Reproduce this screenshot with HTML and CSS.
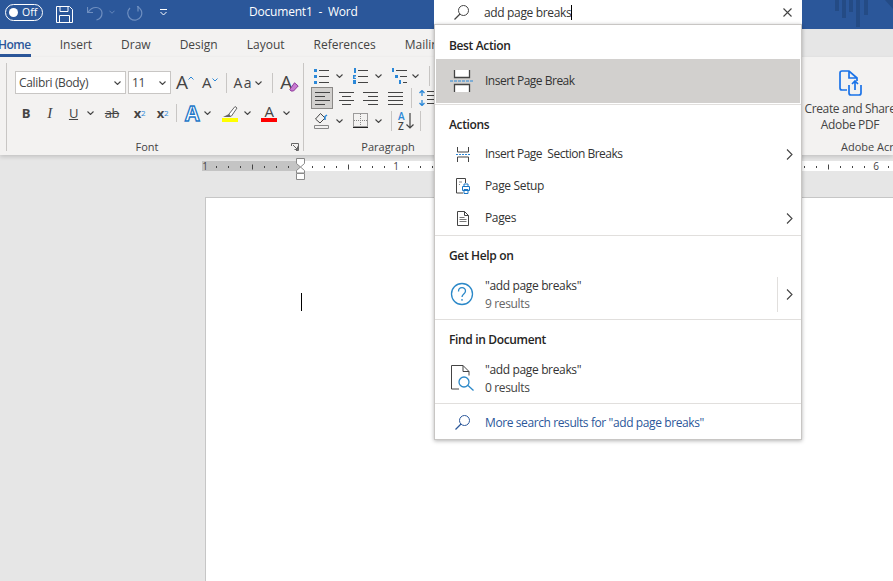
FILE: index.html
```html
<!DOCTYPE html>
<html lang="en">
<head>
    <meta charset="UTF-8">
    <meta name="viewport" content="width=device-width, initial-scale=1.0">
    <title>Document1 - Word</title>
    <link rel="stylesheet" href="styles.css">
</head>
<body>
    <svg class="defs">
        <symbol id="chev" viewBox="0 0 7 4"><path d="M.5.5 3.5 3.5 6.5.5" fill="none" stroke="#444" stroke-width="1.1"/></symbol>
        <symbol id="lines-left" viewBox="0 0 15 14"><path d="M0 1.5h15M0 5.5h10M0 9.5h15M0 13.5h10" stroke="#444"/></symbol>
        <symbol id="lines-center" viewBox="0 0 15 14"><path d="M0 1.5h15M3 5.5h9M0 9.5h15M3 13.5h9" stroke="#444"/></symbol>
        <symbol id="lines-right" viewBox="0 0 15 14"><path d="M0 1.5h15M5 5.5h10M0 9.5h15M5 13.5h10" stroke="#444"/></symbol>
        <symbol id="lines-full" viewBox="0 0 15 14"><path d="M0 1.5h15M0 5.5h15M0 9.5h15M0 13.5h15" stroke="#444"/></symbol>
        <symbol id="arrow-right" viewBox="0 0 7 11"><path d="M1 .5 6 5.5 1 10.5" fill="none" stroke="#444" stroke-width="1.1"/></symbol>
    </svg>

    <header class="titlebar">
        <div class="toggle"><span class="toggle-dot"></span><span>Off</span></div>
        <svg class="qa-save" width="17" height="17" viewBox="0 0 17 17" fill="none" stroke="#fff"><path d="M.5.5h13l3 3v13H.5zM4 .5v5h8v-5M3.5 16.5v-7h10v7"/></svg>
        <svg class="qa-undo" width="16" height="15" viewBox="0 0 16 15" fill="none" stroke="#6f8fc0" stroke-width="1.2"><path d="M.5 1v5.500H6M1 6.500C3 3 6 1.500 9 1.500c3.500 0 6 2.500 6 5.500 0 3-2 6-5.500 7"/></svg>
        <svg class="qa-chev" width="6" height="4" viewBox="0 0 7 4"><path d="M.5.5 3.500 3.500 6.500.5" fill="none" stroke="#6f8fc0"/></svg>
        <svg class="qa-redo" width="16" height="16" viewBox="0 0 16 16" fill="none" stroke="#6f8fc0" stroke-width="1.2"><path d="M10 1.500a7 7 0 1 1-7 1.500M11 1v5.500"/></svg>
        <svg class="qa-more" width="7" height="7" viewBox="0 0 7 7" fill="none" stroke="#fff"><path d="M0 .5h7M.5 3 3.500 6 6.500 3"/></svg>
        <div class="doc-title">Document1&nbsp; -&nbsp; Word</div>
        <svg class="title-art" width="58" height="29" viewBox="0 0 58 29" fill="#244b85"><path d="M0 0h4v11H0zM7 0h4v18H7zM14 0h4v12h-4zM21 0h4v27h-4zM29 0h4v15h-4zM50 0h8v9z"/></svg>
    </header>

    <nav class="tabs">
        <span class="tab tab-active">Home</span>
        <span class="tab">Insert</span>
        <span class="tab">Draw</span>
        <span class="tab">Design</span>
        <span class="tab">Layout</span>
        <span class="tab">References</span>
        <span class="tab">Mailings</span>
    </nav>

    <section class="ribbon">
        <div class="group group-stub"></div>

        <div class="group group-font">
            <div class="font-row font-row-top">
                <div class="combo combo-name"><span>Calibri (Body)</span><svg width="7" height="4"><use href="#chev"/></svg></div>
                <div class="combo combo-size"><span>11</span><svg width="7" height="4"><use href="#chev"/></svg></div>
                <div class="tool grow-a">
                    <span class="a-big">A</span>
                    <svg class="a-caret" width="6" height="4" viewBox="0 0 6 4"><path d="M.5 3.500 3 1 5.500 3.500" fill="none" stroke="#2b88d8"/></svg>
                </div>
                <div class="tool shrink-a">
                    <span class="a-small">A</span>
                    <svg class="a-caret" width="6" height="4" viewBox="0 0 6 4"><path d="M.5.5 3 3 5.500.5" fill="none" stroke="#2b88d8"/></svg>
                </div>
                <span class="sep sep-tall sep-a"></span>
                <div class="tool case-a"><span class="case-text">Aa</span><svg width="7" height="4"><use href="#chev"/></svg></div>
                <span class="sep sep-tall sep-b"></span>
                <div class="tool clear-a">
                    <span class="a-big">A</span>
                    <svg class="eraser" width="10" height="10" viewBox="0 0 10 10"><path d="M5.500.8 9.200 4 4.500 9H2L.8 7.500z" fill="#c77bd0" stroke="#8e3a9d"/></svg>
                </div>
            </div>
            <div class="font-row font-row-bottom">
                <span class="tool t-bold">B</span>
                <span class="tool t-italic">I</span>
                <span class="tool t-under">U</span>
                <svg class="t-chev" width="7" height="4"><use href="#chev"/></svg>
                <span class="tool t-strike">ab</span>
                <span class="tool t-script t-sub">x<sub>2</sub></span>
                <span class="tool t-script t-sup">x<sup>2</sup></span>
                <span class="sep sep-b2"></span>
                <span class="tool t-effect">A</span>
                <svg class="t-chev c-effect" width="7" height="4"><use href="#chev"/></svg>
                <div class="tool t-bar t-marker">
                    <svg width="16" height="13" viewBox="0 0 16 13"><path d="M7 9 13 1.500 15 3 9.500 11 7 11.500z" fill="#fff" stroke="#666"/><path d="M1 12 7 9l2 3z" fill="#666"/></svg>
                    <span class="bar bar-yellow"></span>
                </div>
                <svg class="t-chev c-marker" width="7" height="4"><use href="#chev"/></svg>
                <div class="tool t-bar t-color">
                    <span class="color-a">A</span>
                    <span class="bar bar-red"></span>
                </div>
                <svg class="t-chev c-color" width="7" height="4"><use href="#chev"/></svg>
            </div>
            <div class="group-label font-label">Font</div>
            <svg class="launcher" width="8" height="8" viewBox="0 0 8 8" fill="none" stroke="#666"><path d="M.5 3V.5H7.500V7.500H5M2 2 6.500 6.500M6.500 3.500v3h-3"/></svg>
        </div>

        <div class="group group-para">
            <div class="para-row">
                <svg class="p-bullets" width="15" height="16" viewBox="0 0 15 16"><path d="M0 1h3v3H0zM0 7h3v3H0zM0 13h3v3H0z" fill="#2b88d8"/><path d="M5 2.500h10M5 8.500h10M5 14.500h10" stroke="#444"/></svg>
                <svg class="p-chev" width="7" height="4"><use href="#chev"/></svg>
                <svg class="p-numbers" width="15" height="16" viewBox="0 0 15 16"><path d="M1 0h2v5H1zM0 7h3v1.500H1.500V10H3v1H0zM0 12h3v4H0z" fill="#2b88d8"/><path d="M5 2.500h10M5 8.500h10M5 14.500h10" stroke="#444"/></svg>
                <svg class="p-chev" width="7" height="4"><use href="#chev"/></svg>
                <svg class="p-multi" width="15" height="16" viewBox="0 0 15 16"><path d="M0 0h2v4H0zM3 7h3v3H3zM7 12h2v4H7z" fill="#2b88d8"/><path d="M4 2.500h11M8 8.500h7M11 14.500h4" stroke="#444"/></svg>
                <svg class="p-chev p-chev-multi" width="7" height="4"><use href="#chev"/></svg>
                <span class="sep sep-tall sep-p1"></span>
            </div>
            <div class="para-row">
                <span class="align-active"><svg width="15" height="14"><use href="#lines-left"/></svg></span>
                <svg class="a-center" width="15" height="14"><use href="#lines-center"/></svg>
                <svg class="a-right" width="15" height="14"><use href="#lines-right"/></svg>
                <svg class="a-full" width="15" height="14"><use href="#lines-full"/></svg>
                <span class="sep sep-tall sep-p2"></span>
                <svg class="a-spacing" width="18" height="16" viewBox="0 0 18 16"><path d="M3 0v6M3 10v6M.5 3 3 .5 5.500 3M.5 13 3 15.500 5.500 13" fill="none" stroke="#2b88d8" stroke-width="1.300"/><path d="M8 1.500h10M8 5.500h10M8 9.500h10M8 13.500h10" stroke="#444"/></svg>
            </div>
            <div class="para-row">
                <svg class="s-fill" width="15" height="17" viewBox="0 0 15 17" fill="none"><path d="M1.500 7 6.500 1.500 11 6 6 11z" stroke="#444"/><path d="M11 8V4.500L13 3" stroke="#2b88d8" stroke-width="1.500"/><path d="M.5 13.500h14v3H.5z" stroke="#888"/></svg>
                <svg class="p-chev" width="7" height="4"><use href="#chev"/></svg>
                <svg class="s-borders" width="15" height="15" viewBox="0 0 15 15" fill="none"><path d="M.5.5h14v13H.5z" stroke="#444" stroke-dasharray="1 1"/><path d="M7.500 1v12M1 7.500h13" stroke="#888" stroke-dasharray="1 1"/><path d="M0 14.500h15" stroke="#222"/></svg>
                <svg class="p-chev" width="7" height="4"><use href="#chev"/></svg>
                <span class="sep sep-tall sep-p3"></span>
                <div class="sort">
                    <div class="sort-letters"><span class="sort-a">A</span><span>Z</span></div>
                    <svg width="8" height="16" viewBox="0 0 8 16" fill="none" stroke="#444" stroke-width="1.200"><path d="M4 0v15M.5 11.500 4 15l3.500-3.500"/></svg>
                </div>
                <span class="sep sep-tall sep-p4"></span>
            </div>
            <div class="group-label">Paragraph</div>
        </div>

        <div class="group group-adobe">
            <svg class="adobe-icon" width="24" height="26" viewBox="0 0 24 26" fill="none" stroke="#1a73e8" stroke-width="1.700"><path d="M8 20H3q-2 0-2-2V3q0-2 2-2h7l8 7v3M10 1v7h8"/><path d="M10 15v8q0 2 2 2h8q2 0 2-2v-8M16 20v-9M13 14l3-3 3 3"/></svg>
            <div class="adobe-text">Create and Share<br>Adobe PDF</div>
            <div class="group-label adobe-label">Adobe Acrobat</div>
        </div>
    </section>

    <main class="workspace">
        <svg class="ruler" width="893" height="23" viewBox="0 158 893 23">
            <defs>
                <pattern id="ticks" patternUnits="userSpaceOnUse" width="96" height="23" patternTransform="translate(12 158)">
                    <path d="M12 8h1v2h-1zM24 8h1v2h-1zM36 8h1v2h-1zM48 6.500h1v5h-1zM60 8h1v2h-1zM72 8h1v2h-1zM84 8h1v2h-1z" fill="#444"/>
                </pattern>
            </defs>
            <rect x="202" y="161" width="98" height="10" fill="#c4c4c4"/>
            <rect x="300" y="161" width="593" height="10" fill="#fff"/>
            <rect x="206" y="161" width="687" height="10" fill="url(#ticks)"/>
            <text class="ruler-num" x="205" y="170" text-anchor="middle">1</text>
            <text class="ruler-num" x="396" y="170" text-anchor="middle">1</text>
            <text class="ruler-num" x="876" y="170" text-anchor="middle">6</text>
            <path d="M296.500 158.500h8v5l-4 3.500 4 3.500v2.500h-8v-2.500l4-3.500-4-3.500z" fill="#fff" stroke="#8a8a8a"/>
            <path d="M296.500 173.500h8v6h-8z" fill="#fff" stroke="#8a8a8a"/>
        </svg>
        <div class="page"><span class="text-caret"></span></div>
    </main>

    <div class="search">
        <div class="search-box">
            <svg class="search-icon" width="15" height="15" viewBox="0 0 15 15" fill="none" stroke="#444"><circle cx="9.500" cy="5.500" r="5"/><path d="M6 9 .5 14.500" stroke-width="1.200"/></svg>
            <span class="search-text">add page breaks</span><span class="search-caret"></span>
            <svg class="search-close" width="9" height="9" viewBox="0 0 9 9" stroke="#444" stroke-width="1.100"><path d="M.5.5l8 8M8.500.5l-8 8"/></svg>
        </div>
        <div class="results">
            <div class="result-group group-best">
                <h4>Best Action</h4>
                <div class="result result-best">
                    <svg class="r-icon" width="24" height="22" viewBox="0 0 24 22" fill="#fff" stroke="#444"><path d="M4.500 0v7.500h15V0M4.500 22v-7.500h15V22" stroke-width="1.300"/><path d="M0 11h24" stroke="#2b88d8" stroke-dasharray="3 1"/></svg>
                    <span class="tight">Insert Page Break</span>
                </div>
            </div>
            <div class="result-group">
                <h4>Actions</h4>
                <div class="result">
                    <svg class="r-icon-small" width="14" height="15" viewBox="0 0 14 15" fill="none" stroke="#444"><path d="M1.500 0v5h11V0M1.500 15v-5h11v5"/><path d="M0 7.500h14" stroke="#2b88d8" stroke-dasharray="2 1"/></svg>
                    <span class="tight">Insert Page&nbsp; Section Breaks</span>
                    <svg class="r-arrow" width="7" height="11"><use href="#arrow-right"/></svg>
                </div>
                <div class="result">
                    <svg class="r-icon-small" width="14" height="16" viewBox="0 0 14 16" fill="none"><path d="M7 15H.5V.5h9V5" stroke="#444"/><path d="M3 4h3M3 6.500h1" stroke="#888"/><path d="M6.500 8.500h7v4h-7zM8 8.500V6h4v2.500M8 11.500h4v4H8z" fill="#fff" stroke="#1b76c4"/></svg>
                    <span>Page Setup</span>
                </div>
                <div class="result">
                    <svg class="r-icon-small" width="14" height="15" viewBox="0 0 14 15" fill="none" stroke="#444"><path d="M1.500.500h7l4 4v10h-11zM8.500.5v4h4"/><path d="M3.500 6.500h5M3.500 8.500h7M3.500 10.500h7" stroke="#777"/></svg>
                    <span>Pages</span>
                    <svg class="r-arrow" width="7" height="11"><use href="#arrow-right"/></svg>
                </div>
            </div>
            <div class="result-group group-flush">
                <h4>Get Help on</h4>
                <div class="result result-double">
                    <svg class="r-icon" width="24" height="24" viewBox="0 0 24 24" fill="none" stroke="#2b88c8" stroke-width="1.300"><circle cx="12" cy="12" r="10.500"/><path d="M8.500 9.500c0-5 7-5 7-.5 0 3-3.500 2.800-3.500 6M12 17v1.800"/></svg>
                    <div class="result-lines"><span>"add page breaks"</span><small>9 results</small></div>
                    <span class="r-divider"></span>
                    <svg class="r-arrow r-arrow-split" width="7" height="11"><use href="#arrow-right"/></svg>
                </div>
            </div>
            <div class="result-group group-flush">
                <h4>Find in Document</h4>
                <div class="result result-double">
                    <svg class="r-icon" width="24" height="26" viewBox="0 0 24 26" fill="none"><path d="M9 24H1.500V.5H13l6 6v4" stroke="#444"/><path d="M13 .5v6h6" stroke="#444"/><circle cx="14" cy="17" r="5" fill="#fff" stroke="#2b88c8" stroke-width="1.300"/><path d="M18 20.500 23.500 25.500" stroke="#2b88c8" stroke-width="1.300"/></svg>
                    <div class="result-lines"><span>"add page breaks"</span><small class="dark">0 results</small></div>
                </div>
            </div>
            <div class="result-more">
                <svg class="r-icon-small" width="15" height="15" viewBox="0 0 15 15" fill="none" stroke="#2b579a"><circle cx="9.500" cy="5.500" r="5"/><path d="M6 9 .5 14.500" stroke-width="1.200"/></svg>
                <span>More search results for "add page breaks"</span>
            </div>
        </div>
    </div>
</body>
</html>
```

FILE: styles.css
```css
* {
    box-sizing: border-box;
}
body {
    position: relative;
    display: flex;
    flex-direction: column;
    width: 893px;
    height: 581px;
    margin: 0;
    overflow: hidden;
    font-family: "Open Sans", "Noto Sans", sans-serif;
    font-size: 12px;
    letter-spacing: -0.35px;
    color: #444;
    background-color: #e6e6e6;
}
svg {
    display: block;
    flex: none;
}
.defs {
    position: absolute;
    width: 0;
    height: 0;
}

/* title bar */
.titlebar {
    position: relative;
    display: flex;
    align-items: center;
    flex: none;
    height: 29px;
    padding: 0 0 5px 5px;
    background-color: #2b579a;
    color: white;
}
.toggle {
    display: flex;
    align-items: center;
    gap: 4px;
    width: 38px;
    height: 17px;
    padding-left: 3px;
    border: 1px solid white;
    border-radius: 9px;
    font-size: 10.500px;
    letter-spacing: 0;
}
.toggle-dot {
    width: 9px;
    height: 9px;
    border-radius: 50%;
    background-color: white;
}
.qa-save {
    margin-left: 13px;
    margin-top: 4px;
}
.qa-undo {
    margin-left: 14px;
    margin-top: 2px;
}
.qa-chev {
    margin-left: 6px;
}
.qa-redo {
    margin-left: 12px;
    margin-top: 2px;
}
.qa-more {
    margin-left: 17px;
}
.doc-title {
    margin-left: 82px;
    margin-top: -1px;
    font-size: 12px;
    letter-spacing: -0.2px;
    white-space: nowrap;
}
.title-art {
    position: absolute;
    right: 0;
    top: 0;
}

/* tabs */
.tabs {
    display: flex;
    flex: none;
    gap: 29px;
    width: 440px;
    height: 28px;
    margin-left: -2px;
    overflow: hidden;
    background-color: #f3f2f1;
    letter-spacing: 0;
}
.tab {
    padding-top: 7px;
    white-space: nowrap;
}
.tab-active {
    border-bottom: 3px solid #2b579a;
    font-weight: 600;
    letter-spacing: -0.5px;
    color: #2b579a;
}

/* ribbon */
.ribbon {
    position: relative;
    z-index: 1;
    display: flex;
    flex: none;
    height: 98px;
    overflow: hidden;
    background-color: #f3f2f1;
    box-shadow: 0 2px 4px rgba(0, 0, 0, 0.15);
}
.group {
    position: relative;
    flex: none;
    height: 100%;
}
.group-stub {
    width: 7px;
    border-right: 1px solid #c8c6c4;
    margin: 6px 0 4px;
    height: 88px;
}
.group-font {
    width: 296px;
}
.group-label {
    position: absolute;
    left: 0;
    right: 0;
    top: 82px;
    font-size: 11px;
    letter-spacing: 0;
    text-align: center;
    white-space: nowrap;
}
.font-label {
    right: 16px;
}
.launcher {
    position: absolute;
    left: 284px;
    top: 86px;
}
.font-row {
    display: flex;
    align-items: center;
}
.font-row-top {
    height: 23px;
    margin-top: 14px;
    padding-left: 8px;
}
.font-row-bottom {
    height: 18px;
    margin-top: 10px;
}
.combo {
    display: flex;
    align-items: center;
    justify-content: space-between;
    height: 23px;
    padding: 0 4px 0 3px;
    background-color: white;
    border: 1px solid #c8c6c4;
    font-size: 12px;
}
.combo-name {
    width: 111px;
}
.combo-size {
    width: 43px;
    margin-left: 2px;
}
.tool {
    display: flex;
    align-items: center;
    justify-content: center;
    flex: none;
}
.a-big {
    font-size: 19px;
    line-height: 1;
    letter-spacing: 0;
}
.a-small {
    font-size: 15px;
    line-height: 1;
    letter-spacing: 0;
}
.a-caret {
    align-self: flex-start;
    margin-top: 3px;
}
.grow-a {
    margin-left: 5px;
}
.shrink-a {
    margin-left: 8px;
}
.sep {
    display: block;
    flex: none;
    width: 1px;
    height: 18px;
    background-color: #c8c6c4;
}
.sep-tall {
    height: 20px;
}
.sep-a {
    margin-left: 8px;
}
.case-a {
    gap: 2px;
    margin-left: 7px;
}
.case-text {
    font-size: 14px;
    letter-spacing: 1.500px;
}
.sep-b {
    margin-left: 10px;
}
.clear-a {
    position: relative;
    width: 18px;
    justify-content: flex-start;
    margin-left: 7px;
}
.eraser {
    position: absolute;
    left: 9px;
    bottom: 0;
}
.t-bold {
    width: 24px;
    margin-left: 7px;
    font-size: 13px;
    font-weight: 700;
}
.t-italic {
    width: 23px;
    font-family: "Liberation Serif", serif;
    font-size: 15px;
    font-style: italic;
}
.t-under {
    width: 25px;
    font-size: 13px;
    text-decoration: underline;
}
.t-strike {
    width: 34px;
    font-size: 13px;
    text-decoration: line-through;
    margin-left: -1px;
    margin-right: 1px;
}
.t-chev {
    width: 7px;
    margin: 0 2px 0 1px;
}
.t-script {
    font-size: 13px;
    font-weight: 700;
}
.t-script sub,
.t-script sup {
    font-size: 8px;
    font-weight: 400;
    line-height: 0;
    color: #2b88d8;
}
.t-sub {
    width: 19px;
}
.t-sup {
    width: 27px;
}
.sep-b2 {
    margin-right: 6px;
}
.t-effect {
    width: 18px;
    font-size: 21px;
    font-weight: 700;
    line-height: 1;
    color: #fff;
    -webkit-text-stroke: 1.300px #1e78c8;
}
.c-effect {
    margin: 0 0 0 3px;
}
.t-bar {
    flex-direction: column;
    width: 16px;
}
.bar {
    display: block;
    width: 16px;
    height: 4px;
}
.bar-yellow {
    background-color: #ffff00;
}
.bar-red {
    background-color: #ff0000;
}
.t-marker {
    margin-left: 11px;
}
.c-marker {
    margin: 0 0 0 6px;
}
.t-color {
    margin-left: 10px;
}
.color-a {
    font-size: 15px;
    line-height: 14px;
}
.c-color {
    margin: 0 0 0 6px;
}

/* paragraph group */
.group-para {
    width: 497px;
    height: 88px;
    margin-top: 6px;
    padding-top: 1px;
    border-left: 1px solid #c8c6c4;
}
.group-para .group-label {
    right: auto;
    width: 168px;
    top: 76px;
}
.para-row {
    display: flex;
    align-items: center;
    height: 23px;
}
.para-row:nth-child(2) {
    height: 22px;
}
.p-bullets,
.s-fill,
.p-numbers,
.s-borders,
.p-multi {
    margin-left: 10px;
}
.p-chev {
    margin-left: 7px;
}
.p-chev-multi {
    margin-left: 5px;
}
.sep-p1 {
    margin-left: 10px;
}
.align-active {
    display: flex;
    align-items: center;
    justify-content: center;
    width: 22px;
    height: 22px;
    margin-left: 7px;
    background-color: #d2d0ce;
    border: 1px solid #8a8886;
}
.a-center {
    margin-left: 6px;
}
.a-right {
    margin-left: 9px;
}
.a-full {
    margin-left: 10px;
}
.sep-p2 {
    margin-left: 8px;
}
.a-spacing {
    margin-left: 7px;
}
.sep-p3 {
    margin-left: 9px;
}
.sort {
    display: flex;
    align-items: center;
    gap: 2px;
    margin-left: 6px;
}
.sort-letters {
    display: flex;
    flex-direction: column;
    font-size: 10px;
    font-weight: 600;
    line-height: 10px;
}
.sort-a {
    color: #2b88d8;
}
.sep-p4 {
    margin-left: 6px;
}

/* adobe group */
.group-adobe {
    width: 100px;
}
.adobe-icon {
    margin: 13px 0 0 39px;
}
.adobe-text {
    margin: 5px 0 0;
    line-height: 16px;
    text-align: center;
    white-space: nowrap;
}
.adobe-label {
    left: 41px;
    right: auto;
    text-align: left;
}

/* document area */
.workspace {
    flex: 1;
    overflow: hidden;
}
.ruler {
    margin-top: 3px;
}
.ruler-num {
    font-size: 10px;
    fill: #444;
    letter-spacing: 0;
}
.page {
    width: 700px;
    height: 500px;
    margin: 16px 0 0 205px;
    padding: 95px 0 0 95px;
    background-color: white;
    border: 1px solid #c6c6c6;
}
.text-caret {
    display: block;
    width: 1px;
    height: 18px;
    background-color: black;
}

/* search dropdown */
.search {
    position: absolute;
    z-index: 2;
    left: 434px;
    top: 0;
    width: 368px;
}
.search-box {
    display: flex;
    align-items: center;
    height: 24px;
    padding-left: 20px;
    background-color: white;
    color: #333;
}
.search-text {
    margin-left: 15px;
}
.search-caret {
    width: 1px;
    height: 15px;
    background-color: black;
}
.search-close {
    margin-left: auto;
    margin-right: 10px;
}
.results {
    border: 1px solid #c8c6c4;
    background-color: white;
    box-shadow: 0 1px 4px rgba(0, 0, 0, 0.3);
    color: #333;
}
.result-group {
    padding-bottom: 1px;
    border-bottom: 1px solid #e1dfdd;
}
.group-flush {
    padding-bottom: 0;
}
.result-group h4 {
    height: 26px;
    margin: 7px 0 0;
    padding-left: 14px;
    font-size: 12px;
    font-weight: 600;
    line-height: 26px;
    color: #252423;
}
.group-best h4 {
    margin-top: 8px;
}
.result {
    display: flex;
    align-items: center;
    height: 32px;
    padding-left: 21px;
}
.result > span:not(.r-divider) {
    margin: -2px 0 0 15px;
}
.result > span.tight {
    letter-spacing: -0.5px;
}
.result-best {
    height: 44px;
    margin: 0 1px;
    padding-left: 14px;
    background-color: #d2d0ce;
}
.r-icon {
    margin-left: -6px;
}
.result-best .r-icon {
    margin-left: 0;
}
.result-best > span:not(.r-divider) {
    margin-left: 11px;
}
.r-arrow {
    margin-left: auto;
    margin-right: 8px;
}
.result-double {
    height: 50px;
}
.result-lines {
    display: flex;
    flex-direction: column;
    gap: 3px;
    margin-left: 11px;
    line-height: 15px;
}
.result-lines small {
    font-size: 12px;
    color: #666;
}
.result-lines small.dark {
    color: #444;
}
.r-divider {
    width: 1px;
    height: 35px;
    margin-left: auto;
    background-color: #e1dfdd;
}
.r-arrow-split {
    margin-left: 8px;
}
.result-more {
    display: flex;
    align-items: center;
    gap: 15px;
    height: 35px;
    padding: 1px 0 0 20px;
    letter-spacing: -0.4px;
    color: #2b579a;
}
```
